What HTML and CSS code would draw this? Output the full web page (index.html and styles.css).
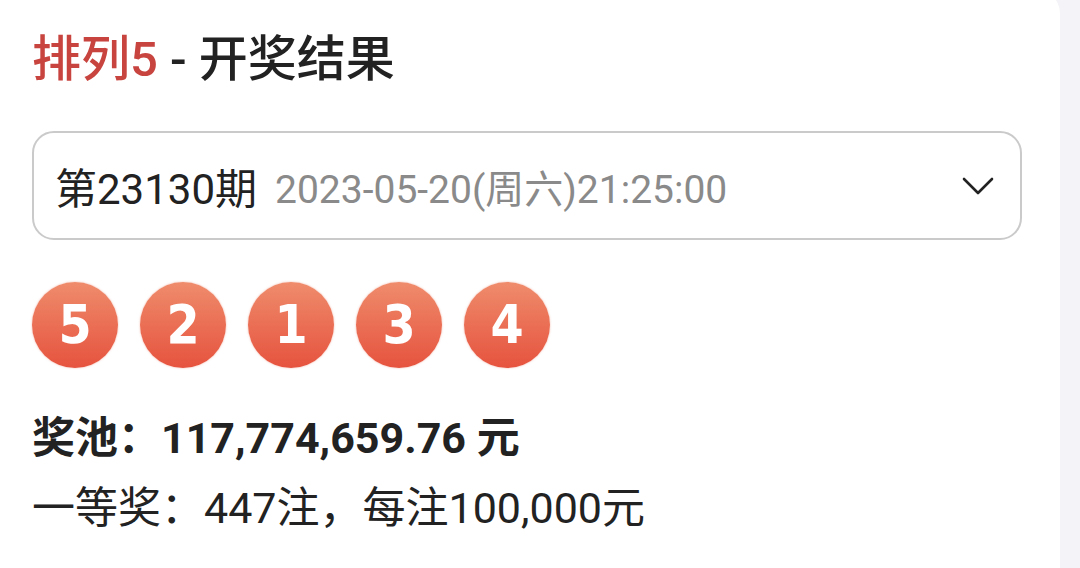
FILE: index.html
```html
<!DOCTYPE html>
<html lang="zh-CN">
<head>
  <meta charset="UTF-8">
  <meta name="viewport" content="width=device-width, initial-scale=1.0">
  <title>排列5 - 开奖结果</title>
  <link rel="stylesheet" href="styles.css">
</head>
<body>
  <div class="card">
    <h1 class="title"><span class="game">排列5</span> - 开奖结果</h1>

    <div class="issue-select">
      <span class="issue">第23130期</span>
      <span class="date">2023-05-20(周六)21:25:00</span>
      <svg class="chevron" width="32" height="18" viewBox="0 0 32 18">
        <path d="M2 2 L16 16 L30 2" fill="none" stroke="#222" stroke-width="2.6" stroke-linecap="round" stroke-linejoin="round"/>
      </svg>
    </div>

    <div class="balls">
      <div class="ball">5</div>
      <div class="ball">2</div>
      <div class="ball">1</div>
      <div class="ball">3</div>
      <div class="ball">4</div>
    </div>

    <div class="pool">奖池：117,774,659.76 元</div>
    <div class="prize">一等奖：447注，每注100,000元</div>
  </div>
</body>
</html>
```

FILE: styles.css
```css
body {
  margin: 0;
  background: #f4f4f8;
  font-family: Roboto, "Noto Sans CJK SC", sans-serif;
  color: #222;
  overflow: hidden;
}
.card {
  width: 1060px;
  height: 600px;
  box-sizing: border-box;
  margin-top: -12px;
  padding: 44px 38px 0 32px;
  background: #fff;
  border-top-right-radius: 26px;
}
.title {
  margin: 0;
  font-size: 49px;
  font-weight: 500;
  line-height: 56px;
}
.title .game {
  color: #c8443f;
}
.issue-select {
  display: flex;
  align-items: center;
  height: 109px;
  box-sizing: border-box;
  margin-top: 43px;
  padding: 0 26px 0 21px;
  border: 2px solid #cacaca;
  border-radius: 22px;
}
.issue {
  font-size: 42px;
}
.date {
  margin-left: 18px;
  font-size: 39px;
  color: #8a8a8a;
}
.chevron {
  margin-left: auto;
}
.balls {
  display: flex;
  gap: 22px;
  margin-top: 42px;
}
.ball {
  width: 86px;
  height: 86px;
  border-radius: 50%;
  background: linear-gradient(180deg, #ef8c6c 0%, #ea6c52 55%, #e6533f 100%);
  box-shadow: 0 0 2px rgba(230, 90, 60, 0.5);
  color: #fff;
  font-family: "DejaVu Sans Condensed", "DejaVu Sans", sans-serif;
  font-weight: 700;
  font-size: 53px;
  line-height: 86px;
  text-align: center;
}
.pool {
  margin-top: 42px;
  font-size: 43px;
  font-weight: 700;
  line-height: 56px;
}
.prize {
  margin-top: 14px;
  font-size: 43px;
  line-height: 56px;
}
```
